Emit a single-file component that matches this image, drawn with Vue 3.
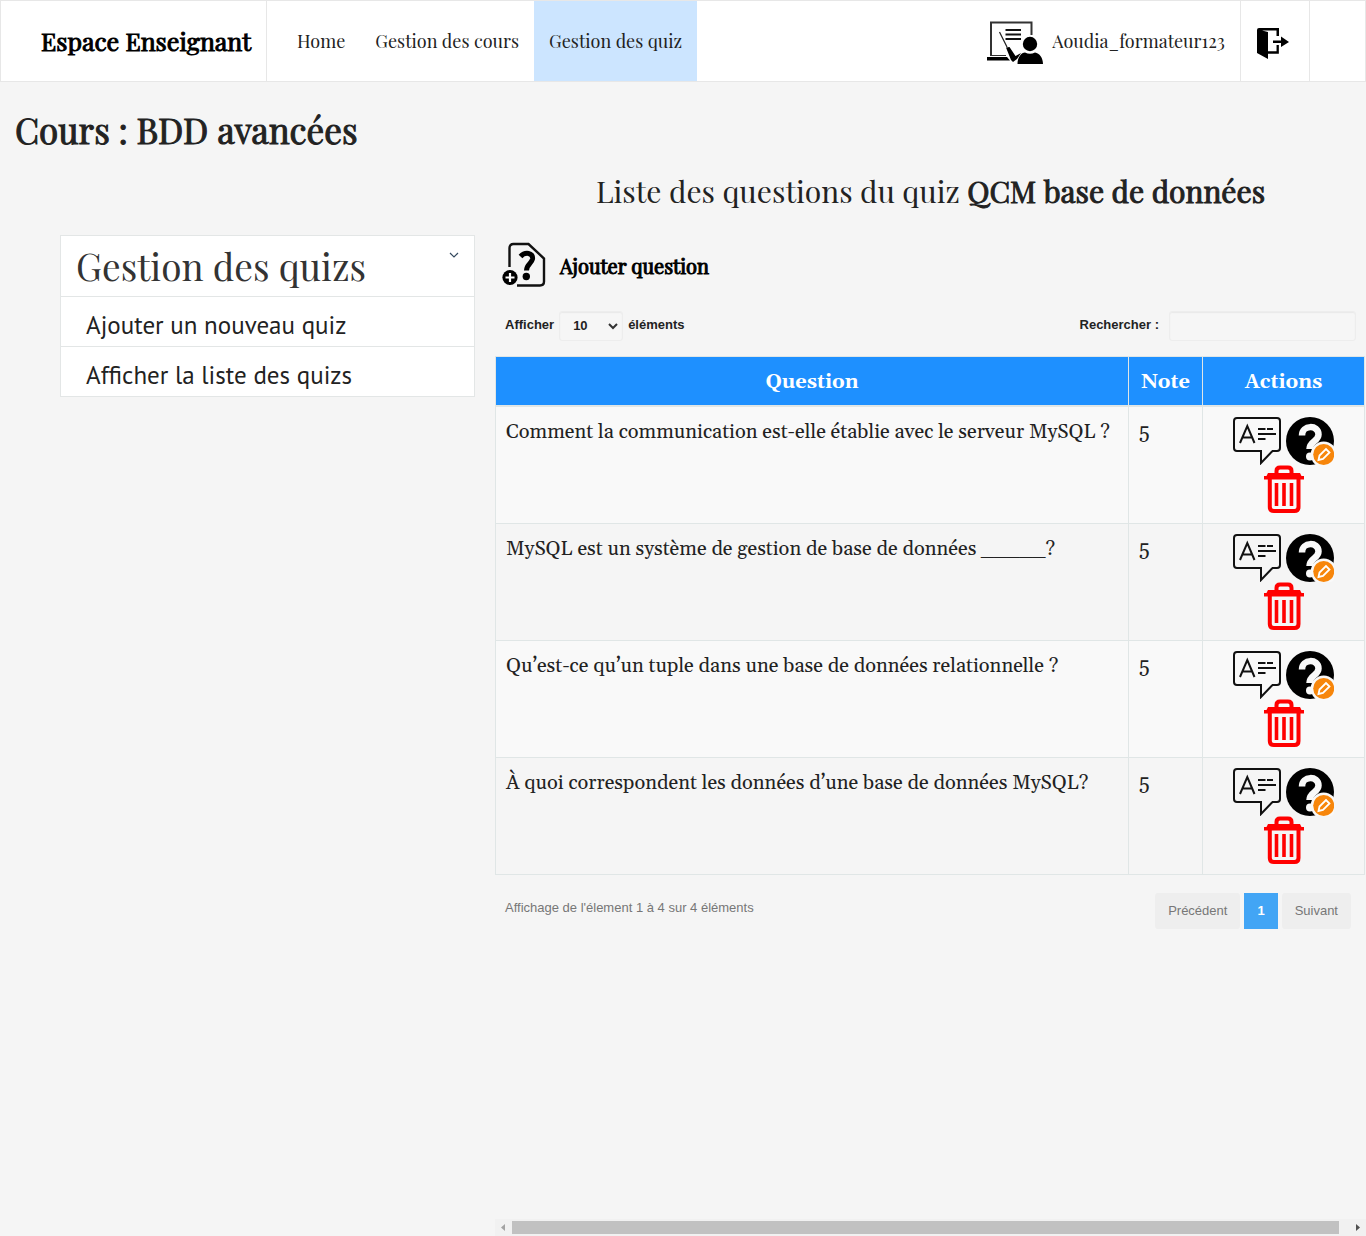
<script setup>
import { ref } from 'vue'

const pageSize = ref('10')
const search = ref('')
const links = [
  { label: 'Home', active: false },
  { label: 'Gestion des cours', active: false },
  { label: 'Gestion des quiz', active: true },
]
const questions = [
  { text: 'Comment la communication est-elle établie avec le serveur MySQL ?', note: 5 },
  { text: 'MySQL est un système de gestion de base de données _____?', note: 5 },
  { text: 'Qu’est-ce qu’un tuple dans une base de données relationnelle ?', note: 5 },
  { text: 'À quoi correspondent les données d’une base de données MySQL?', note: 5 },
]
</script>

<template>
  <div class="page">
    <header class="topbar">
      <a class="brand" href="#">Espace Enseignant</a>
      <nav class="links">
        <a v-for="l in links" :key="l.label" href="#" :class="{ active: l.active }">{{ l.label }}</a>
      </nav>
      <a class="user" href="#">
        <svg width="57" height="44" viewBox="0 0 57 44" aria-hidden="true">
          <path d="M5 35V1.500H45.500V14" fill="none" stroke="#333" stroke-width="2" />
          <path d="M4 34.500H20" stroke="#333" stroke-width="1" />
          <path d="M1 36H21L24 39.500H1Z" />
          <path d="M19.500 9H35M19.500 13.500H35M19.500 18H35" stroke="#111" stroke-width="1.800" />
          <path d="M13.500 11L21 26" stroke="#222" stroke-width="1.300" />
          <path d="M20 26.500L23.500 26L29.500 35L35 32L31 38L27 41L25 39Z" />
          <circle cx="44" cy="23" r="7.200" />
          <path d="M31.500 43C31.500 36 35.500 31.500 39 31.500Q44 34 49 31.500C53.500 32 57 37 57 43Z" />
        </svg>
        <span>Aoudia_formateur123</span>
      </a>
      <a class="logout" href="#" aria-label="Déconnexion">
        <svg width="33" height="33" viewBox="0 0 33 33" aria-hidden="true">
          <path d="M1 3Q1 1 3 1H23V9H20.500V3.500H6L12 5V32L1 26Z" />
          <path d="M12 25.500H21.700V18" fill="none" stroke="#000" stroke-width="2.300" />
          <path d="M17 13.500H25V9.500L33 15L25 20V16H17Z" />
        </svg>
      </a>
    </header>

    <h1>Cours : BDD avancées</h1>

    <div class="body">
      <aside class="side">
        <div class="side-head">
          <h2>Gestion des quizs</h2>
          <button type="button" aria-label="Replier">
            <svg width="10" height="6" viewBox="0 0 10 6"><path d="M1 1L5 5L9 1" fill="none" stroke="#34495e" stroke-width="1.200" /></svg>
          </button>
        </div>
        <a href="#">Ajouter un nouveau quiz</a>
        <a href="#">Afficher la liste des quizs</a>
      </aside>

      <main class="content">
        <h3>Liste des questions du quiz <b>QCM base de données</b></h3>

        <a class="add" href="#">
          <svg width="45" height="46" viewBox="0 0 45 46" aria-hidden="true">
            <path d="M7.500 25V6Q7.500 2 11.500 2H26.500L42 16.500V39.500Q42 43.500 38 43.500H15" fill="none" stroke="#111" stroke-width="2.400" />
            <path d="M18.500 14.500C23 9.500 31.500 10.500 30.500 17C29.500 22 24.500 22 24.500 28.500" fill="none" stroke="#000" stroke-width="5" />
            <circle cx="24.300" cy="34.500" r="3.700" />
            <circle cx="8" cy="35.500" r="7.600" />
            <path d="M8 31V40M3.500 35.500H12.500" stroke="#fff" stroke-width="2.200" />
          </svg>
          <b>Ajouter question</b>
        </a>

        <div class="tools">
          <label>Afficher
            <span class="select">
              <select v-model="pageSize"><option>10</option><option>25</option><option>50</option></select>
              <svg width="10" height="7" viewBox="0 0 10 7"><path d="M1 1L5 5L9 1" fill="none" stroke="#333" stroke-width="2" /></svg>
            </span>
            éléments</label>
          <label class="search">Rechercher : <input v-model="search" type="search" /></label>
        </div>

        <table>
          <thead>
            <tr><th>Question</th><th class="note">Note</th><th class="actions">Actions</th></tr>
          </thead>
          <tbody>
            <tr v-for="q in questions" :key="q.text">
              <td>{{ q.text }}</td>
              <td>{{ q.note }}</td>
              <td>
                <div class="icons">
                  <button type="button" aria-label="Réponses">
                    <svg width="48" height="48" viewBox="0 0 48 48">
                      <path d="M4 1H44Q47 1 47 4V31Q47 34 44 34H39.500L28 46V34H4Q1 34 1 31V4Q1 1 4 1Z" fill="none" stroke="#111" stroke-width="2" />
                      <path d="M7 26L14.300 9L21.500 26M9.500 20.500H19.500" fill="none" stroke="#111" stroke-width="2" />
                      <path d="M25 12H32.500M34 12H40M25 17H43M25 22H32.500" stroke="#111" stroke-width="2" />
                    </svg>
                  </button>
                  <button type="button" aria-label="Modifier">
                    <svg width="48" height="48" viewBox="0 0 48 48">
                      <circle cx="24" cy="24" r="24" />
                      <path d="M16 18.500C16 7.500 32.500 7.500 32.500 17.500C32.500 24.500 23.500 24 23.500 32" fill="none" stroke="#f9f9f9" stroke-width="6.500" />
                      <circle cx="24" cy="39.500" r="4" fill="#f9f9f9" />
                      <circle cx="37.700" cy="37.500" r="13" fill="#f9f9f9" />
                      <circle cx="37.700" cy="37.500" r="10.500" fill="#f7860b" />
                      <path d="M32.500 43L33.500 38.500L40 32L43.500 35.500L37 42Z" fill="none" stroke="#fff" stroke-width="1.800" />
                    </svg>
                  </button>
                  <button type="button" aria-label="Supprimer">
                    <svg width="48" height="48" viewBox="0 0 48 48">
                      <path d="M16.500 9V6Q16.500 2.500 20 2.500H28Q31.500 2.500 31.500 6V9" fill="none" stroke="#f00" stroke-width="4" />
                      <path d="M8 8H40L41.500 11H44V14.500H4V11H6.500Z" fill="#f00" />
                      <path d="M9.800 13V42Q9.800 46 13.800 46H34.500Q38.500 46 38.500 42V13" fill="none" stroke="#f00" stroke-width="4" />
                      <path d="M16.500 18V41M24 18V41M31.500 18V41" stroke="#f00" stroke-width="3.600" />
                    </svg>
                  </button>
                </div>
              </td>
            </tr>
          </tbody>
        </table>

        <div class="foot">
          <p>Affichage de l'élement 1 à 4 sur 4 éléments</p>
          <div class="pager">
            <button type="button">Précédent</button>
            <button type="button" class="current">1</button>
            <button type="button">Suivant</button>
          </div>
        </div>

        <div class="hscroll">
          <svg width="17" height="17" viewBox="0 0 17 17"><path d="M10 5V12L6 8.500Z" fill="#a3a3a3" /></svg>
          <div class="thumb"></div>
          <svg width="17" height="17" viewBox="0 0 17 17"><path d="M7 5V12L11 8.500Z" fill="#505050" /></svg>
        </div>
      </main>
    </div>
  </div>
</template>

<style>
body {
  margin: 0;
  background: #f5f5f5;
}
</style>

<style scoped>
* {
  box-sizing: border-box;
}
.page {
  min-height: 100vh;
  display: flex;
  flex-direction: column;
  background: #f5f5f5;
  color: #222;
  font-family: "Playfair Display", "Liberation Serif", serif;
}
svg {
  display: block;
  flex: none;
}
a {
  color: inherit;
  text-decoration: none;
}
button {
  border: 0;
  padding: 0;
  background: none;
  cursor: pointer;
}
h1, h2, h3, p {
  margin: 0;
}
.topbar {
  display: flex;
  height: 82px;
  padding-right: 55px;
  background: #fff;
  border: 1px solid #e7e7e7;
  font-size: 18px;
}
.topbar a {
  display: flex;
  align-items: center;
  white-space: nowrap;
}
.brand, h1, h3 b, .add b {
  font-weight: 400;
  -webkit-text-stroke: 1px currentColor;
}
.topbar .brand {
  padding: 0 15px 2px 40px;
  border-right: 1px solid #e7e7e7;
  color: #000;
  font-size: 25px;
}
.links {
  display: flex;
  margin-left: 15px;
}
.links a {
  padding: 0 15px;
}
.links .active {
  background: #cce5ff;
}
.user {
  gap: 9px;
  margin-left: auto;
  padding: 0 15px;
}
.user svg {
  margin-top: 4px;
}
.logout {
  padding: 4px 20px 0 15px;
  border: solid #e7e7e7;
  border-width: 0 1px;
}
h1 {
  padding: 23px 15px 0;
  font-size: 35px;
  line-height: 50px;
}
.body {
  flex: 1;
  display: grid;
  grid-template-columns: 415px minmax(0, 1fr);
  gap: 20px;
  padding-left: 60px;
}
.side {
  align-self: start;
  margin-top: 80px;
  background: #fff;
  border: 1px solid #e3e6e6;
}
.side-head {
  display: flex;
  justify-content: space-between;
  align-items: flex-start;
  height: 60px;
  padding: 0 15px;
}
.side-head button {
  margin-top: 16px;
}
h2 {
  color: #333;
  font-size: 37px;
  font-weight: 400;
  line-height: 60px;
}
.side a {
  display: block;
  height: 50px;
  padding: 8px 25px 0;
  border-top: 1px solid #e3e6e6;
  font: 25px/40px "PT Sans", "Noto Sans", sans-serif;
}
.content {
  display: flex;
  flex-direction: column;
}
h3 {
  padding-top: 14px;
  text-align: center;
  font-size: 30px;
  font-weight: 400;
  line-height: 44px;
}
.add {
  display: flex;
  align-self: flex-start;
  align-items: center;
  gap: 13px;
  margin: 29px 0 0 7px;
  color: #000;
  font-size: 20px;
}
.tools {
  display: flex;
  justify-content: space-between;
  padding: 23px 10px 15px;
  font: 700 13px/28px "Liberation Sans", Arial, sans-serif;
}
.tools label {
  display: flex;
  gap: 5px;
}
.tools .search {
  gap: 10px;
}
.select {
  display: grid;
  align-items: center;
  width: 64px;
}
.select > * {
  grid-area: 1 / 1;
}
.select svg {
  justify-self: end;
  margin-right: 5px;
  pointer-events: none;
}
select, input {
  appearance: none;
  height: 30px;
  padding: 0 13px;
  border: 1px solid #ededed;
  border-radius: 3px;
  background: #f6f6f6;
  box-shadow: inset 0 1px 1px #e9e9e9;
  color: #222;
  font: inherit;
}
select {
  width: 100%;
}
input {
  width: 187px;
}
table {
  width: calc(100% - 1px);
  border-collapse: collapse;
  font: 20px/30px Georgia, Gelasio, "Liberation Serif", serif;
}
th, td {
  padding: 10px;
  border: 1px solid #e0e6e6;
  text-align: left;
  vertical-align: top;
  white-space: nowrap;
}
th {
  padding-bottom: 8px;
  border-bottom-width: 2px;
  background: #1e90ff;
  color: #fff;
  text-align: center;
}
.note {
  width: 74px;
}
.actions {
  width: 162px;
}
tbody tr:nth-child(odd) {
  background: #f9f9f9;
}
.icons {
  display: flex;
  flex-wrap: wrap;
  justify-content: center;
  column-gap: 5px;
}
.foot {
  display: flex;
  justify-content: space-between;
  padding: 18px 15px 0 10px;
  color: #777;
  font: 13px/30px "Liberation Sans", Arial, sans-serif;
}
.pager {
  display: flex;
  gap: 4px;
}
.pager button {
  height: 36px;
  padding: 0 13px 2px;
  border-radius: 3px;
  background: #eee;
  color: #777;
  font: 13px "Liberation Sans", Arial, sans-serif;
}
.pager .current {
  border-radius: 0;
  background: #42a5f5;
  color: #fff;
  font-weight: 700;
}
.hscroll {
  display: flex;
  align-items: center;
  height: 17px;
  margin-top: auto;
  background: #f1f1f1;
}
.thumb {
  flex: 1;
  height: 13px;
  margin-right: 10px;
  background: #c1c1c1;
}
</style>
